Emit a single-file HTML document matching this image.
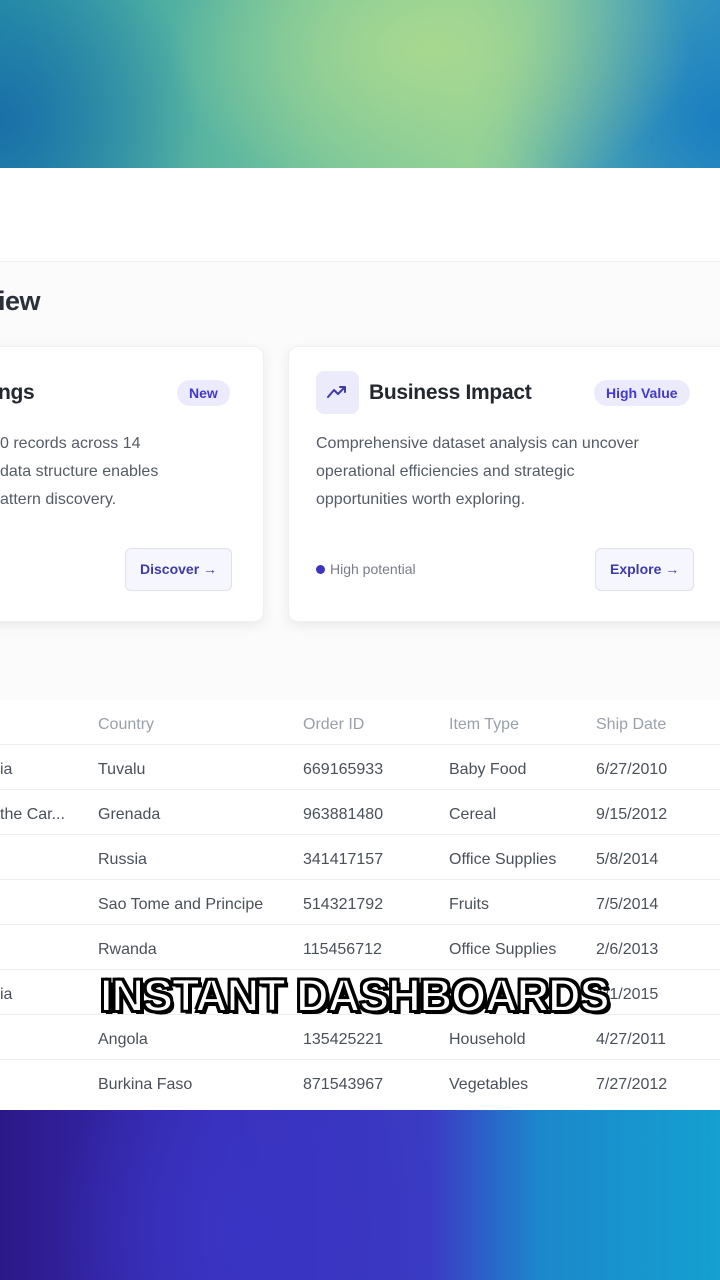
<!DOCTYPE html>
<html><head><meta charset="utf-8"><style>
*{margin:0;padding:0;box-sizing:border-box}
body{width:720px;height:1280px;overflow:hidden;position:relative;font-family:"Liberation Sans",sans-serif;background:#fff}
.top{position:absolute;left:0;top:0;width:720px;height:170px;background:
radial-gradient(ellipse 260px 160px at 430px 50px,#a8d890 0%,rgba(168,216,144,0) 100%),
radial-gradient(ellipse 200px 200px at 0px 120px,#1a6fa8 0%,rgba(26,111,168,0) 100%),
radial-gradient(ellipse 220px 200px at 720px 120px,#1b7fc0 0%,rgba(27,127,192,0) 100%),
linear-gradient(90deg,#2a9aa8,#74c49c 45%,#8ccf98 65%,#3a9cc0)}
.bot{position:absolute;left:0;top:1110px;width:720px;height:170px;background:
radial-gradient(ellipse 200px 200px at 250px 120px,#3a34c4 0%,rgba(58,52,196,0) 100%),
linear-gradient(90deg,#2c1888 0%,#3830bc 30%,#3a3cc4 60%,#1c88cc 75%,#14a0d0 100%)}
.panel{position:absolute;left:0;top:168px;width:720px;height:942px;background:#fbfbfc}
.hdr{position:absolute;left:0;top:168px;width:720px;height:94px;background:#fff;border-bottom:1px solid #f0f1f3}
h1{position:absolute;left:-2px;top:286px;font-size:27px;font-weight:bold;color:#2a2f3a;letter-spacing:-0.5px}
.card{position:absolute;top:346px;height:276px;background:#fff;border-radius:10px;box-shadow:0 4px 12px rgba(0,0,0,.07);border:1px solid #eef0f3}
.tt{position:absolute;font-size:21px;font-weight:bold;color:#23272f;letter-spacing:-0.3px}
.badge{position:absolute;top:380px;height:26px;padding:0 12px;border-radius:13px;background:#ecebfd;color:#4338ca;font-size:14px;font-weight:bold;line-height:26px}
.p{position:absolute;font-size:16px;color:#555b66;line-height:28px}
.btn{position:absolute;top:548px;height:43px;border:1px solid #e0e0ee;border-radius:6px;background:#f6f6fe;color:#3f3aa8;font-size:14px;font-weight:bold;line-height:41px;padding:0 14px}
.tbl{position:absolute;left:0;top:700px;width:720px;background:#fff;height:410px}
.row{position:absolute;left:0;width:720px;height:45px;border-bottom:1px solid #eceef1;font-size:16px;color:#4a505a}
.row span{position:absolute;top:16px;white-space:nowrap}
.th{color:#9aa0aa}
.cap{position:absolute;left:100px;top:970px;font-size:45px;font-weight:900;color:#fff;letter-spacing:-1px;
-webkit-text-stroke:2px #000;text-shadow:3px 3px 0 #000,-2px -2px 0 #000,2px -2px 0 #000,-2px 2px 0 #000;font-family:"Liberation Sans",sans-serif;white-space:nowrap}
</style></head><body>
<div class="top"></div>
<div class="panel"></div>
<div class="hdr"></div>
<h1>iew</h1>
<div class="card" style="left:-20px;width:284px"></div>
<div class="card" style="left:288px;width:450px"></div>
<div class="tt" style="left:-2px;top:381px">ngs</div>
<div class="badge" style="left:177px">New</div>
<div class="p" style="left:0;top:430px">0 records across 14<br>data structure enables<br>attern discovery.</div>
<div class="btn" style="left:125px">Discover →</div>
<div style="position:absolute;left:316px;top:371px;width:43px;height:43px;border-radius:8px;background:#ecebfb"></div>
<svg style="position:absolute;left:326px;top:383px" width="22" height="18" viewBox="0 0 22 18"><path d="M2 14 L8 7 L12 11 L19 4 M14 4 H19 V9" fill="none" stroke="#3f3aa8" stroke-width="2" stroke-linecap="round" stroke-linejoin="round"/></svg>
<div class="tt" style="left:369px;top:381px">Business Impact</div>
<div class="badge" style="left:594px">High Value</div>
<div class="p" style="left:316px;top:430px">Comprehensive dataset analysis can uncover<br>operational efficiencies and strategic<br>opportunities worth exploring.</div>
<div style="position:absolute;left:316px;top:565px;width:9px;height:9px;border-radius:50%;background:#3a34c0"></div>
<div style="position:absolute;left:330px;top:561px;font-size:14px;color:#777c86">High potential</div>
<div class="btn" style="left:595px">Explore →</div>
<div class="tbl"></div>
<div class="row" style="top:700px"><span class="th" style="left:98px">Country</span><span class="th" style="left:303px">Order ID</span><span class="th" style="left:449px">Item Type</span><span class="th" style="left:596px">Ship Date</span></div>
<div class="row" style="top:745px"><span style="left:0">ia</span><span style="left:98px">Tuvalu</span><span style="left:303px">669165933</span><span style="left:449px">Baby Food</span><span style="left:596px">6/27/2010</span></div>
<div class="row" style="top:790px"><span style="left:0">the Car...</span><span style="left:98px">Grenada</span><span style="left:303px">963881480</span><span style="left:449px">Cereal</span><span style="left:596px">9/15/2012</span></div>
<div class="row" style="top:835px"><span style="left:98px">Russia</span><span style="left:303px">341417157</span><span style="left:449px">Office Supplies</span><span style="left:596px">5/8/2014</span></div>
<div class="row" style="top:880px"><span style="left:98px">Sao Tome and Principe</span><span style="left:303px">514321792</span><span style="left:449px">Fruits</span><span style="left:596px">7/5/2014</span></div>
<div class="row" style="top:925px"><span style="left:98px">Rwanda</span><span style="left:303px">115456712</span><span style="left:449px">Office Supplies</span><span style="left:596px">2/6/2013</span></div>
<div class="row" style="top:970px"><span style="left:0">ia</span><span style="left:596px">1/1/2015</span></div>
<div class="row" style="top:1015px"><span style="left:98px">Angola</span><span style="left:303px">135425221</span><span style="left:449px">Household</span><span style="left:596px">4/27/2011</span></div>
<div class="row" style="top:1060px;border:0"><span style="left:98px">Burkina Faso</span><span style="left:303px">871543967</span><span style="left:449px">Vegetables</span><span style="left:596px">7/27/2012</span></div>
<div class="cap">INSTANT DASHBOARDS</div>
<div class="bot"></div>
</body></html>
